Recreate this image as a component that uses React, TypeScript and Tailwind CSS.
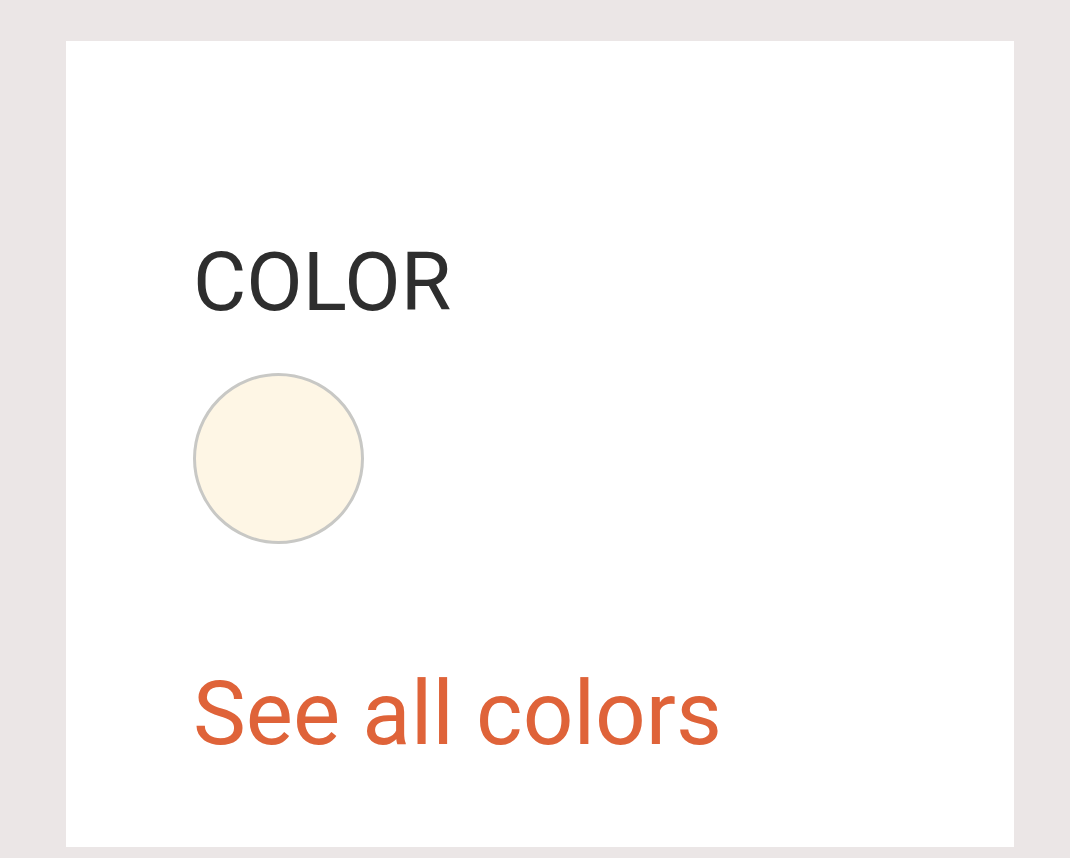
export default function App() {
  return (
    <div className="w-[1070px] h-[858px] bg-[#ebe6e6] pt-[41px] pl-[66px]" style={{ fontFamily: "Roboto, 'Noto Sans', sans-serif" }}>
      <div className="w-[948px] h-[806px] bg-white pt-[200px] pl-[127px] flex flex-col items-start">
        <div className="text-[82px] leading-[82px] text-[#2e2e2e] font-normal">COLOR</div>
        <div className="mt-[50px] w-[171px] h-[171px] rounded-full bg-[#fef6e5] border-[3px] border-[#c8c8c5]"></div>
        <div className="mt-[125px] text-[89px] leading-[89px] text-[#df6339] font-normal">See all colors</div>
      </div>
    </div>
  );
}
